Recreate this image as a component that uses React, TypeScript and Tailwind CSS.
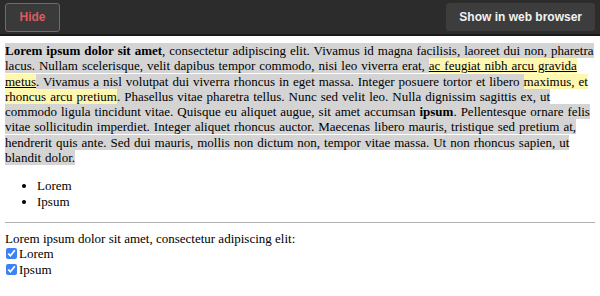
import React from "react";

const serif = { fontFamily: '"Liberation Serif", "Times New Roman", serif' };

function Toolbar() {
  return (
    <div className="flex items-center justify-between h-[36px] px-[5px] bg-[#2c2c2c] border-b-2 border-[#1a1a1a] font-['Liberation_Sans',Arial,sans-serif]">
      <button className="h-[29px] w-[55px] rounded-[3px] border border-[#a8525a] bg-[#3a3a3a] text-[12px] font-bold text-[#dc5a60]">
        Hide
      </button>
      <button className="h-[28px] px-[13px] rounded-[3px] bg-[#3d3d3d] text-[12px] font-bold text-[#f2f2f2]">
        Show in web browser
      </button>
    </div>
  );
}

export default function App() {
  return (
    <div className="w-[600px] h-[296px] bg-white overflow-hidden">
      <Toolbar />
      <div className="px-[5px] text-[13px] leading-[15.3px] text-black" style={serif}>
        <p className="mt-[7px] [word-spacing:0.75px]">
          <span className="bg-[#d4d4d4]">
            <b>Lorem ipsum dolor sit amet</b>, consectetur adipiscing elit. Vivamus id magna facilisis, laoreet dui non, pharetra lacus. Nullam scelerisque, velit dapibus tempor commodo, nisi leo viverra erat,{" "}
          </span>
          <span className="bg-[#fdf7b0] underline">ac feugiat nibh arcu gravida metus</span>
          <span className="bg-[#d4d4d4]">. Vivamus a nisl volutpat dui viverra rhoncus in eget massa. Integer posuere tortor et libero </span>
          <span className="bg-[#fdf7b0]">maximus, et rhoncus arcu pretium</span>
          <span className="bg-[#d4d4d4]">
            . Phasellus vitae pharetra tellus. Nunc sed velit leo. Nulla dignissim sagittis ex, ut commodo ligula tincidunt vitae. Quisque eu aliquet augue, sit amet accumsan <b>ipsum</b>. Pellentesque ornare felis vitae sollicitudin imperdiet. Integer aliquet rhoncus auctor. Maecenas libero mauris, tristique sed pretium at, hendrerit quis ante. Sed dui mauris, mollis non dictum non, tempor vitae massa. Ut non rhoncus sapien, ut blandit dolor.
          </span>
        </p>
        <ul className="list-disc pl-[32px] mt-[13px]">
          <li>Lorem</li>
          <li>Ipsum</li>
        </ul>
        <hr className="mt-[13px] border-t border-[#b0b0b0]" />
        <p className="mt-[8px]">Lorem ipsum dolor sit amet, consectetur adipiscing elit:</p>
        <label className="flex items-center gap-[2px]">
          <input type="checkbox" defaultChecked className="w-[11px] h-[11px] ml-[1px] accent-[#3b82f6]" />
          Lorem
        </label>
        <label className="flex items-center gap-[2px]">
          <input type="checkbox" defaultChecked className="w-[11px] h-[11px] ml-[1px] accent-[#3b82f6]" />
          Ipsum
        </label>
      </div>
    </div>
  );
}
